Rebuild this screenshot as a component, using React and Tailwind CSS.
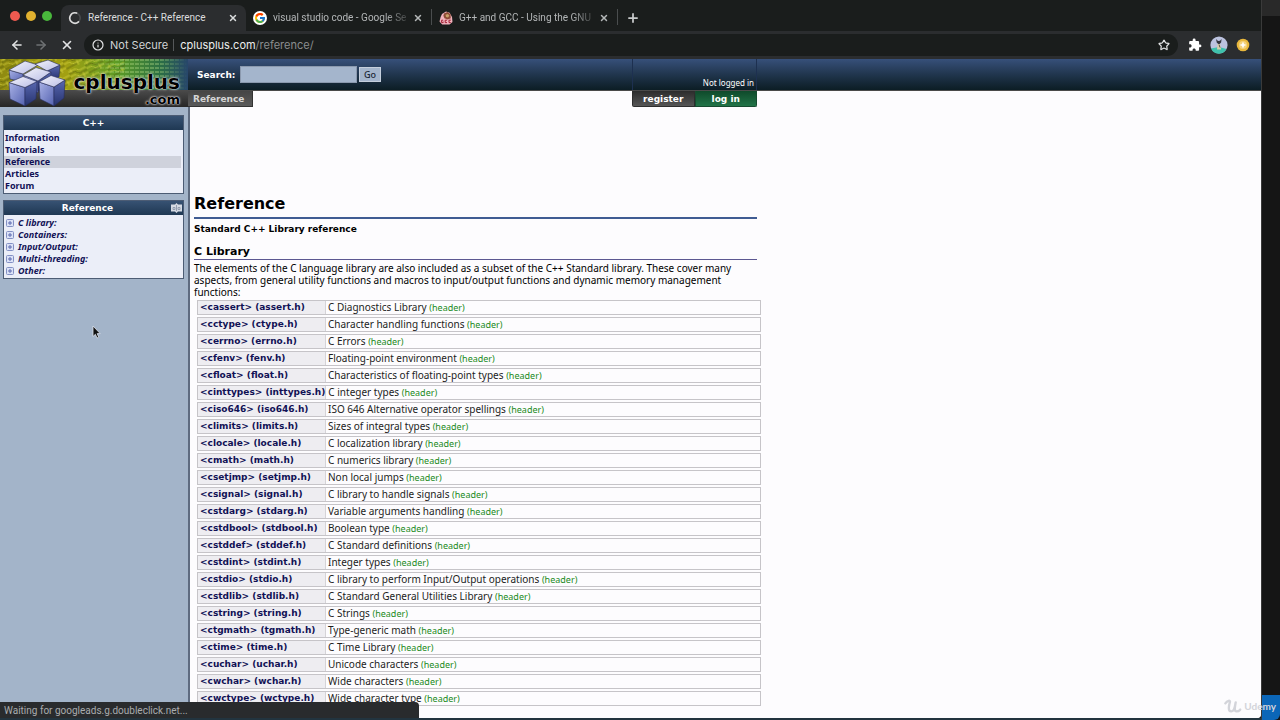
import { ArrowLeft, ArrowRight, X, Info, Star, Plus } from "lucide-react";
import { MdExtension } from "react-icons/md";
import { FcGoogle } from "react-icons/fc";

const LIBRARY = [
  ["<cassert> (assert.h)", "C Diagnostics Library"],
  ["<cctype> (ctype.h)", "Character handling functions"],
  ["<cerrno> (errno.h)", "C Errors"],
  ["<cfenv> (fenv.h)", "Floating-point environment"],
  ["<cfloat> (float.h)", "Characteristics of floating-point types"],
  ["<cinttypes> (inttypes.h)", "C integer types"],
  ["<ciso646> (iso646.h)", "ISO 646 Alternative operator spellings"],
  ["<climits> (limits.h)", "Sizes of integral types"],
  ["<clocale> (locale.h)", "C localization library"],
  ["<cmath> (math.h)", "C numerics library"],
  ["<csetjmp> (setjmp.h)", "Non local jumps"],
  ["<csignal> (signal.h)", "C library to handle signals"],
  ["<cstdarg> (stdarg.h)", "Variable arguments handling"],
  ["<cstdbool> (stdbool.h)", "Boolean type"],
  ["<cstddef> (stddef.h)", "C Standard definitions"],
  ["<cstdint> (stdint.h)", "Integer types"],
  ["<cstdio> (stdio.h)", "C library to perform Input/Output operations"],
  ["<cstdlib> (stdlib.h)", "C Standard General Utilities Library"],
  ["<cstring> (string.h)", "C Strings"],
  ["<ctgmath> (tgmath.h)", "Type-generic math"],
  ["<ctime> (time.h)", "C Time Library"],
  ["<cuchar> (uchar.h)", "Unicode characters"],
  ["<cwchar> (wchar.h)", "Wide characters"],
  ["<cwctype> (wctype.h)", "Wide character type"],
];

const SECTIONS = ["Information", "Tutorials", "Reference", "Articles", "Forum"];
const TREE = ["C library:", "Containers:", "Input/Output:", "Multi-threading:", "Other:"];

function Spinner() {
  return (
    <svg viewBox="0 0 14 14" className="size-3.5 shrink-0" fill="none" strokeWidth="1.6">
      <circle cx="7" cy="7" r="5.2" stroke="#4a4c4e" />
      <path d="M10.5 10.9A5.2 5.2 0 1 1 8.6 2.1" stroke="#dcdcdc" strokeLinecap="round" />
    </svg>
  );
}

function GccIcon() {
  return (
    <svg viewBox="0 0 14 14" className="size-3.5 shrink-0">
      <path d="M3 3 7 .6l3.6 1.2L13 6l.5 5-3 2.6H3.2L.5 10.5 1.6 6z" fill="#f0b3bd" />
      <path d="M5 2.4 8.5 1l3 2.2.3 4-3 1.4-3.4-1.4-1-2.4z" fill="#8c4a35" />
      <path d="M6.5 3.8 9 3l1.4 1.8L9 6.6 7 6z" fill="#c7a16a" />
      <path d="M4.2 9.2H2.6v2.4h1.6v-1M8 9.2H6.2v2.4H8M11.8 9.2H10v2.4h1.8" fill="none" stroke="#a32236" strokeWidth="1" />
    </svg>
  );
}

function Tab({ icon, title, active }) {
  return (
    <div
      className={
        active
          ? "flex h-[26px] w-[185px] items-center gap-1.5 rounded-t-lg bg-[#2b2d2f] pr-2 pl-[7px] text-[#dadcdd]"
          : "flex h-[26px] w-[185px] items-center gap-1.5 pr-2 pl-[7px] text-[#b4b7b8]"
      }
    >
      {icon}
      <span
        className={
          active
            ? "min-w-0 flex-1 text-[10px] leading-4 whitespace-nowrap"
            : "min-w-0 flex-1 text-[10px] leading-4 whitespace-nowrap [mask-image:linear-gradient(to_right,black_112px,transparent_140px)]"
        }
      >
        {title}
      </span>
      <button type="button" aria-label="Close tab" className="shrink-0">
        <X className="size-2.5" strokeWidth={3.5} />
      </button>
    </div>
  );
}

function BrowserChrome() {
  return (
    <div className="shrink-0 font-[Inter,sans-serif]">
      <div className="flex h-[31px] items-end bg-[#1a1d1c] font-[Roboto,sans-serif]">
        <div className="flex h-full w-[61px] items-center gap-1.5 pl-2.5">
          <span className="size-2.5 rounded-full bg-[#ee5a50]" />
          <span className="size-2.5 rounded-full bg-[#e1b12f]" />
          <span className="size-2.5 rounded-full bg-[#49b83c]" />
        </div>
        <Tab active icon={<Spinner />} title="Reference - C++ Reference" />
        <Tab icon={<span className="grid size-3.5 shrink-0 place-items-center rounded-full bg-white"><FcGoogle className="size-3" /></span>} title="visual studio code - Google Se" />
        <span className="mb-1.5 h-4 w-px bg-[#4a4d4e]" />
        <Tab icon={<GccIcon />} title="G++ and GCC - Using the GNU" />
        <span className="mb-1.5 h-4 w-px bg-[#4a4d4e]" />
        <button type="button" aria-label="New tab" className="mb-1.5 ml-2 text-[#c9cbcc]">
          <Plus className="size-3.5" strokeWidth={3} />
        </button>
      </div>
      <div className="flex h-7 items-center bg-[#2b2d2f] pr-[11px] pl-2.5 text-[#e2e3e4]">
        <button type="button" aria-label="Back"><ArrowLeft className="size-3.5" strokeWidth={2.6} /></button>
        <button type="button" aria-label="Forward" className="ml-2.5 text-[#6f7274]"><ArrowRight className="size-3.5" strokeWidth={2.6} /></button>
        <button type="button" aria-label="Stop" className="ml-3"><X className="size-3.5" strokeWidth={2.8} /></button>
        <div className="ml-2.5 flex h-[22px] min-w-0 flex-1 items-center rounded-full bg-[#1a1d1c] pr-2 pl-2 text-[11px]">
          <Info className="size-3" strokeWidth={2.4} />
          <span className="ml-1.5 text-[#d2d4d5]">Not Secure</span>
          <span className="mr-1.5 ml-[5px] h-3 w-px bg-[#55585a]" />
          <span className="flex-1 whitespace-nowrap text-[#eceded]">
            cplusplus.com<span className="text-[#8a8d8f]">/reference/</span>
          </span>
          <button type="button" aria-label="Bookmark"><Star className="size-3" strokeWidth={2.4} /></button>
        </div>
        <button type="button" aria-label="Extensions" className="ml-2.5 text-white"><MdExtension className="size-3.5" /></button>
        <svg viewBox="0 0 18 18" className="ml-2 size-[18px]">
          <circle cx="9" cy="9" r="8.6" fill="#bcc3df" />
          <path d="M1 12.5 9 11l7.5 2A8.6 8.6 0 0 1 1 12.5z" fill="#3fc2ac" />
          <path d="M6 3l2 2 2-.3L11.6 3l-.5 3.5-2 2-2.3-1.8z" fill="#33353d" />
          <path d="M7.5 8h2.6l1 5.5H7z" fill="#d8cfae" />
          <path d="M9 8.5l1 3" stroke="#59584f" strokeWidth="1" />
        </svg>
        <svg viewBox="0 0 14 14" className="ml-2 size-3.5">
          <circle cx="7" cy="7" r="6.3" fill="#e9b83d" />
          <circle cx="7" cy="7" r="4" fill="#f4d27d" />
          <path d="M7 4.5v5M4.5 7h5" stroke="#fff" strokeWidth="1.6" />
        </svg>
      </div>
    </div>
  );
}

function Logo() {
  return (
    <a href="#home" aria-label="cplusplus.com" className="relative block h-12 w-[188px] shrink-0">
      <svg viewBox="0 0 188 48" className="block h-12 w-full">
        <defs>
          <linearGradient id="board" x1="0" x2="1">
            <stop offset="0" stopColor="#8f8a10" />
            <stop offset=".35" stopColor="#a3a012" />
            <stop offset=".62" stopColor="#5d9c25" />
            <stop offset=".85" stopColor="#2c7044" />
            <stop offset="1" stopColor="#27466b" />
          </linearGradient>
          <linearGradient id="shade" x1="0" x2="0" y1="0" y2="1">
            <stop offset="0" stopColor="#4b4b4b" />
            <stop offset="1" stopColor="#262626" />
          </linearGradient>
          <linearGradient id="cubeTop" x1="0" x2="1" y1="0" y2="1">
            <stop offset="0" stopColor="#f4f4fb" />
            <stop offset="1" stopColor="#b9bde6" />
          </linearGradient>
          <linearGradient id="cubeLeft" x1="0" x2="1" y1="0" y2="1">
            <stop offset="0" stopColor="#a9b2e6" />
            <stop offset="1" stopColor="#5462b0" />
          </linearGradient>
          <linearGradient id="cubeRight" x1="0" x2="0" y1="0" y2="1">
            <stop offset="0" stopColor="#5867b0" />
            <stop offset="1" stopColor="#27336f" />
          </linearGradient>
          <pattern id="traces" width="18" height="14" patternUnits="userSpaceOnUse" patternTransform="rotate(-28)">
            <path d="M0 2h8l3 3h7M0 7h5l4 4h9M3 0v4M13 8v6" fill="none" stroke="#dfdc4a" strokeWidth="1" opacity=".6" />
            <path d="M0 4h6l4 4h8M0 12h12" fill="none" stroke="#4c5208" strokeWidth="1" opacity=".6" />
          </pattern>
          <pattern id="pins" width="5" height="4" patternUnits="userSpaceOnUse">
            <path d="M0 1h4" stroke="#b9e08c" strokeWidth="1" opacity=".7" />
          </pattern>
          <linearGradient id="pinFade" x1="0" x2="1">
            <stop offset="0" stopColor="#000" />
            <stop offset=".3" stopColor="#fff" />
            <stop offset=".7" stopColor="#fff" />
            <stop offset="1" stopColor="#000" />
          </linearGradient>
          <mask id="pinMask"><rect x="90" width="98" height="32" fill="url(#pinFade)" /></mask>
        </defs>
        <rect width="188" height="32" fill="url(#board)" />
        <rect width="125" height="32" fill="url(#traces)" />
        <rect x="90" width="98" height="32" fill="url(#pins)" mask="url(#pinMask)" />
        <rect y="31" width="188" height="17" fill="url(#shade)" />
        <g stroke="#262d5c" strokeWidth=".6" strokeLinejoin="round">
          <path d="M9 11 23 15v8L10 20z" fill="url(#cubeLeft)" />
          <path d="M9 11 25 2l13 4-15 9z" fill="url(#cubeTop)" />
          <path d="M60 6 47 12l1 9 11-3z" fill="url(#cubeRight)" />
          <path d="M35 5 48 1l12 5-13 6z" fill="url(#cubeTop)" />
          <path d="M23 16 38 22v12l-3-2z" fill="url(#cubeLeft)" />
          <path d="M51 13 38 22v10l12-8z" fill="url(#cubeRight)" />
          <path d="M23 16 36 8.5 51 13l-13 9z" fill="url(#cubeTop)" />
          <path d="M9 23.5 25 28.5V47L10 40z" fill="url(#cubeLeft)" />
          <path d="M25 28.5 37 22.5 36 40 25 47z" fill="url(#cubeRight)" />
          <path d="M9 23.5 23 17.5l14 5-12 6z" fill="url(#cubeTop)" />
          <path d="M39 23 54 28v19L40 40z" fill="url(#cubeLeft)" />
          <path d="M54 28 65 21 64 39 54 47z" fill="url(#cubeRight)" />
          <path d="M39 23 51 16.5 65 21 54 28z" fill="url(#cubeTop)" />
        </g>
      </svg>
      <span className="absolute top-3 right-2 flex flex-col items-end font-bold text-black [text-shadow:0_0_1px_#fff,0_0_2px_#ddd,0_0_3px_#bbb]">
        <span className="text-xl leading-[22px]">cplusplus</span>
        <span className="text-[13px] leading-[14px]">.com</span>
      </span>
    </a>
  );
}

function SiteHeader() {
  return (
    <header className="flex h-12 shrink-0 text-[9px]">
      <Logo />
      <div className="flex min-w-0 flex-1 flex-col bg-[#fdfcfe]">
        <div className="flex h-8 border-b border-[#4a4a4a] bg-linear-to-b from-[#37507a] to-[#0c1d25]">
          <form className="flex w-[444px] items-center pl-[9px]" onSubmit={(e) => e.preventDefault()}>
            <label htmlFor="q" className="w-[43px] leading-4 font-bold text-white">Search:</label>
            <input id="q" type="text" className="h-[17px] w-[117px] border border-[#8b99ae] bg-[#a4b5cc] px-1 outline-none" />
            <button type="submit" className="ml-0.5 h-[15px] w-[22px] border border-[#c5cfdd] bg-[#a4b5cc] font-['Noto_Sans',sans-serif] leading-3 font-medium text-[#1c2836]">Go</button>
          </form>
          <div className="flex w-[125px] items-end justify-end border-x border-[#1d3050] pr-0.5 font-['Noto_Sans',sans-serif] text-[8px] leading-[14px] text-white">
            Not logged in
          </div>
        </div>
        <div className="flex h-4 leading-[14px] font-bold">
          <div className="w-[444px]">
            <a href="#reference" className="flex h-4 w-[65px] items-center border-r border-b border-[#333] bg-linear-to-b from-[#454545] to-[#5a5a5a] pl-[5px] text-[#d5d5d5]">Reference</a>
          </div>
          <nav className="flex w-[125px] text-white">
            <a href="#register" className="grid h-4 w-1/2 place-items-center rounded-bl-xs border border-t-0 border-[#2e2e2e] bg-linear-to-b from-[#2c2c2c] to-[#565656]">register</a>
            <a href="#login" className="grid h-4 w-1/2 place-items-center rounded-br-xs border border-t-0 border-[#174b30] bg-linear-to-b from-[#0f4a2b] to-[#227448]">log in</a>
          </nav>
        </div>
      </div>
    </header>
  );
}

function Panel({ title, action, children }) {
  return (
    <section className="border border-[#4c5c74] bg-[#ebeef8]">
      <h2 className="flex h-3.5 items-center bg-linear-to-b from-[#375273] to-[#1f3853] font-['DejaVu_Sans',sans-serif] text-[9px] leading-3 font-bold text-white">
        <span className="flex-1 text-center">{title}</span>
        {action}
      </h2>
      {children}
    </section>
  );
}

function Sidebar() {
  return (
    <aside className="flex w-[190px] shrink-0 flex-col gap-1.5 border-r-2 border-[#5e6b80] bg-[#a3b4c9] py-2 pr-1 pl-[3px] font-['Noto_Sans',sans-serif] text-[9px] leading-3 font-bold text-[#111155]">
      <Panel title="C++">
        <ul className="pt-0.5 pb-px">
          {SECTIONS.map((s) => (
            <li key={s} className={s === "Reference" ? "mr-0.5 h-[12px] bg-[#cfd2dc] pl-px" : "h-[12px] pl-px"}>
              <a href={"#" + s}>{s}</a>
            </li>
          ))}
        </ul>
      </Panel>
      <Panel
        title="Reference"
        action={
          <button type="button" aria-label="Collapse panel" className="mr-px">
            <svg viewBox="0 0 11 10" className="h-2.5 w-[11px]">
              <path d="M0 1.500h4L5.500 0 7 1.500h4v7H7L5.500 10 4 8.500H0z" fill="#d5dae3" />
              <path d="M2 4.500h2v2H2zM7 4.500h2v2H7zM5.500 2v6" fill="none" stroke="#8c97aa" strokeWidth=".9" />
            </svg>
          </button>
        }
      >
        <ul className="pt-0.5 pb-px italic">
          {TREE.map((t) => (
            <li key={t} className="flex h-[12px] items-center gap-1 pl-0.5">
              <svg viewBox="0 0 8 8" className="size-2" fill="none" stroke="#8390c4">
                <rect x=".5" y=".5" width="7" height="7" rx="1" fill="#dbe2f7" />
                <path d="M2 4h4M4 2v4" stroke="#5d6bb0" />
              </svg>
              <a href={"#" + t}>{t}</a>
            </li>
          ))}
        </ul>
      </Panel>
    </aside>
  );
}

function Article() {
  return (
    <main className="min-w-0 flex-1 bg-[#fdfcfe] pt-[86px] pl-1 text-[9px] text-black">
      <div className="w-[563px]">
        <h1 className="border-b-2 border-[#405c93] pb-0.5 text-base leading-[22px] font-bold">Reference</h1>
        <p className="mt-1 leading-3 font-bold">Standard C++ Library reference</p>
        <h2 className="mt-2.5 border-b border-[#5c5791] text-[11px] leading-[14px] font-bold">C Library</h2>
        <p className="mt-0.5 font-['Noto_Sans',sans-serif] text-[10px] leading-3">
          The elements of the C language library are also included as a subset of the C++ Standard library. These cover many aspects, from general utility functions and macros to input/output functions and dynamic memory management functions:
        </p>
      </div>
      <dl className="mt-0.5 ml-[3px] flex w-[564px] flex-col gap-0.5">
        {LIBRARY.map(([name, text]) => (
          <div key={name} className="flex h-[15px] border border-[#c6c4c8] leading-[13px] whitespace-nowrap">
            <dt className="min-w-[128px] border-r border-[#d5d3d7] bg-[#eeedf1] pl-0.5 font-bold text-[#111155]">
              <a href={"#" + name}>{name}</a>
            </dt>
            <dd className="pl-0.5 font-['Noto_Sans',sans-serif] text-[10px] text-[#1c1c1c]">
              {text} <span className="text-[9px] text-[#218a21]">(header)</span>
            </dd>
          </div>
        ))}
      </dl>
    </main>
  );
}

export default function App() {
  return (
    <div className="relative flex h-screen overflow-hidden bg-[#151515] font-['DejaVu_Sans',sans-serif]">
      <div className="flex min-w-0 flex-1 flex-col border-b-2 border-[#22343f]">
        <BrowserChrome />
        <div className="flex min-h-0 flex-1 flex-col overflow-hidden rounded-br-sm bg-[#fdfcfe]">
          <SiteHeader />
          <div className="flex min-h-0 flex-1">
            <Sidebar />
            <Article />
          </div>
        </div>
      </div>
      <div className="flex w-[19px] shrink-0 flex-col justify-between border-l border-[#3a3a3a]">
        <div className="h-4 bg-[#292929]" />
        <div className="h-[25px] rounded-br-md bg-[#0b66b8]" />
      </div>
      <div className="absolute bottom-0.5 left-0 flex h-4 w-[419px] items-center rounded-tr-sm bg-[#292b2d] pl-1 font-[Roboto,sans-serif] text-[10px] text-[#a9acae]">
        Waiting for googleads.g.doubleclick.net...
      </div>
      <svg viewBox="0 0 9 14" className="absolute top-[325px] left-[92px] h-3.5 w-[9px]">
        <path d="M1 1v10.5l2.4-2.2 1.6 3.7 1.700-.8L5.2 8.600h3z" fill="#111" stroke="#dfe4ee" strokeWidth=".8" />
      </svg>
      <div className="absolute right-1 bottom-1.5 flex items-center gap-0.5 text-[#d3d4da]">
        <svg viewBox="0 0 20 16" className="h-4 w-[18px]" fill="none" stroke="currentColor" strokeWidth="2.6" strokeLinecap="round" strokeLinejoin="round">
          <path d="M1.500 5c2-3 6-4 5-1S4 14 8 14s4-6 5-10c-1 5-2 10 1 10s3-1 4-2" />
        </svg>
        <span className="font-[Lato,sans-serif] text-[10px] leading-4 font-bold">Udemy</span>
      </div>
    </div>
  );
}
